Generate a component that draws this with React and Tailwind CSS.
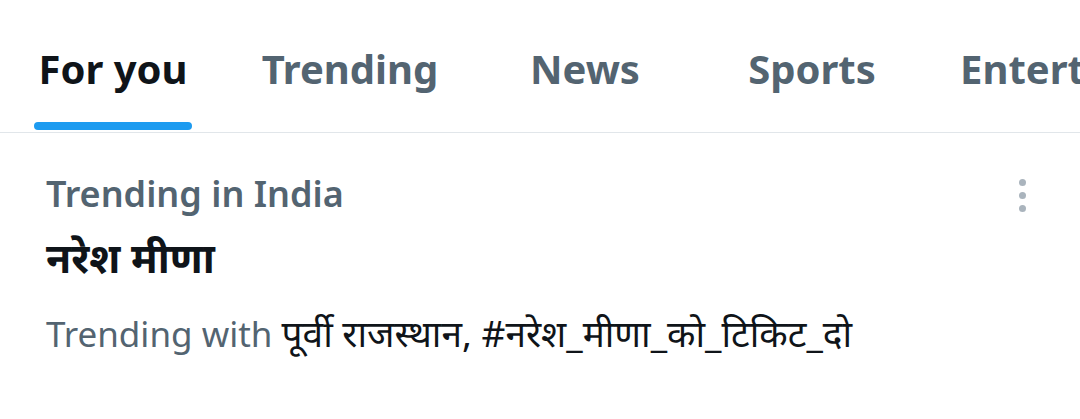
import React from 'react';

const tabs = [
  { label: 'For you', width: 'w-[226px]', active: true },
  { label: 'Trending', width: 'w-[248px]' },
  { label: 'News', width: 'w-[222px]' },
  { label: 'Sports', width: 'w-[232px]' },
];

const font = { fontFamily: '"Noto Sans", "Noto Sans Devanagari", "Lohit Devanagari", sans-serif' };

export default function App() {
  return (
    <div className="w-[1080px] h-[419px] bg-white overflow-hidden" style={font}>
      {/* Tabs */}
      <div className="flex border-b border-[#e1e6ea] h-[133px] overflow-hidden">
        {tabs.map(tab => (
          <div key={tab.label} className={`${tab.width} shrink-0 flex flex-col items-center`}>
            <div
              className={`pt-[39px] h-[122px] text-[40px] font-bold leading-[60px] whitespace-nowrap ${
                tab.active ? 'text-[#0f1419]' : 'text-[#536471]'
              }`}
            >
              {tab.label}
            </div>
            {tab.active && <div className="w-[158px] h-[8px] rounded-full bg-[#1d9bf0]"></div>}
          </div>
        ))}
        <div className="pl-[32px] pt-[39px] text-[40px] font-bold leading-[60px] whitespace-nowrap text-[#536471]">
          Entertainment
        </div>
      </div>

      {/* Trend item */}
      <div className="relative px-[46px] pt-[36px]">
        <div className="text-[36px] font-semibold text-[#536471] leading-[50px]">Trending in India</div>
        <div className="mt-[10px] text-[41px] font-bold text-[#0f1419] leading-[56px]">नरेश मीणा</div>
        <div className="mt-[23px] text-[35px] text-[#536471] leading-[50px] whitespace-nowrap">
          Trending with <span className="text-[37px] text-[#0f1419]">पूर्वी राजस्थान, #नरेश_मीणा_को_टिकिट_दो</span>
        </div>

        {/* More menu */}
        <div className="absolute right-[54px] top-[46px] flex flex-col gap-[6px]">
          <div className="w-[7px] h-[7px] rounded-full bg-[#aab4bd]"></div>
          <div className="w-[7px] h-[7px] rounded-full bg-[#aab4bd]"></div>
          <div className="w-[7px] h-[7px] rounded-full bg-[#aab4bd]"></div>
        </div>
      </div>
    </div>
  );
}
